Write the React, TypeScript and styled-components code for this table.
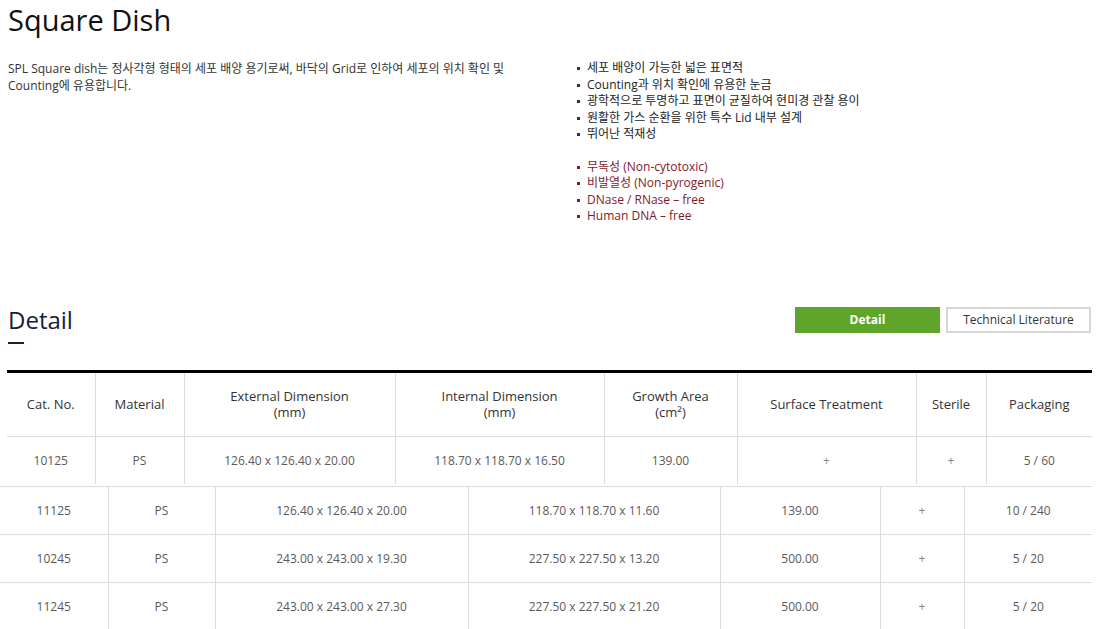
import React from 'react';
import styled, { createGlobalStyle } from 'styled-components';

type SpecRow = {
  cat: string;
  material: string;
  external: string;
  internal: string;
  area: string;
  surface?: string;
  sterile: string;
  packaging: string;
};

const GlobalStyle = createGlobalStyle`
  body {
    margin: 0;
    background: #fff;
    font-family: 'Open Sans', 'Noto Sans CJK KR', sans-serif;
    color: #333;
  }
`;

const Page = styled.div`
  width: 1097px;
  overflow: hidden;
`;

const Title = styled.h1`
  margin: 0;
  padding-left: 8px;
  font-size: 29px;
  font-weight: 400;
  line-height: 40px;
  color: #111;
`;

const Intro = styled.section`
  display: grid;
  grid-template-columns: 575px 1fr;
  margin-top: 20px;
`;

const Lead = styled.p`
  margin: 0;
  padding-left: 8px;
  max-width: 500px;
  font-size: 12px;
  line-height: 17px;
  color: #333;
`;

const Features = styled.ul`
  margin: 0;
  padding: 0;
  list-style: none;
`;

const Feature = styled.li<{ accent?: boolean; spaced?: boolean }>`
  position: relative;
  padding-left: 12px;
  margin-top: ${(p) => (p.spaced ? '16px' : '0')};
  font-size: 12px;
  line-height: 16.5px;
  color: ${(p) => (p.accent ? '#7e1a2a' : '#222')};
  &::before {
    content: '';
    position: absolute;
    left: 2px;
    top: 7px;
    width: 3px;
    height: 3px;
    background: ${(p) => (p.accent ? '#7e1a2a' : '#333')};
  }
`;

const DetailBar = styled.div`
  display: flex;
  justify-content: space-between;
  align-items: flex-start;
  margin-top: 80px;
  padding: 0 6px 0 8px;
  margin-bottom: 26px;
`;

const Heading = styled.h2`
  margin: 0;
  font-size: 24px;
  font-weight: 400;
  line-height: 30px;
  color: #15203a;
  &::after {
    content: '';
    display: block;
    width: 16px;
    height: 2px;
    margin-top: 7px;
    background: #15203a;
  }
`;

const Tabs = styled.div`
  display: flex;
  gap: 6px;
  margin-top: 2px;
`;

const Tab = styled.button<{ active?: boolean }>`
  width: 145px;
  height: 26px;
  padding: 0;
  font-family: inherit;
  font-size: 12px;
  font-weight: ${(p) => (p.active ? 700 : 400)};
  color: ${(p) => (p.active ? '#fff' : '#333')};
  background: ${(p) => (p.active ? '#5fa52a' : '#fff')};
  border: 2px solid ${(p) => (p.active ? '#5fa52a' : '#d6d6d6')};
  cursor: pointer;
`;

const SpecTable = styled.table<{ offset: number; width: number; ruled?: boolean; gap?: number }>`
  margin-left: ${(p) => p.offset}px;
  margin-top: ${(p) => p.gap ?? 0}px;
  width: ${(p) => p.width}px;
  table-layout: fixed;
  border-collapse: collapse;
  border-top: ${(p) => (p.ruled ? '3px solid #000' : '1px solid #dcdcdc')};
`;

const HeadCell = styled.th`
  height: 63px;
  padding: 0 4px;
  font-size: 13px;
  font-weight: 400;
  line-height: 16px;
  color: #333;
  text-align: center;
  border-bottom: 1px solid #dcdcdc;
  & + & {
    border-left: 1px solid #dcdcdc;
  }
`;

const HeadLine = styled.span`
  display: block;
`;

const Cell = styled.td`
  height: 47px;
  padding: 0 4px;
  font-size: 12px;
  color: #5a5a5a;
  text-align: center;
  & + & {
    border-left: 1px solid #dcdcdc;
  }
`;

const Row = styled.tr<{ ruled?: boolean }>`
  border-bottom: ${(p) => (p.ruled ? '1px solid #dcdcdc' : 'none')};
`;

const Plus = styled.span`
  color: #888;
`;

const headCols = [88, 89, 211, 209, 133, 179, 70, 106];
const bodyCols = [108, 107, 253, 252, 160, 84, 128];

const headers: string[][] = [
  ['Cat. No.'],
  ['Material'],
  ['External Dimension', '(mm)'],
  ['Internal Dimension', '(mm)'],
  ['Growth Area', '(cm²)'],
  ['Surface Treatment'],
  ['Sterile'],
  ['Packaging'],
];

const firstRow: SpecRow = {
  cat: '10125',
  material: 'PS',
  external: '126.40 x 126.40 x 20.00',
  internal: '118.70 x 118.70 x 16.50',
  area: '139.00',
  surface: '+',
  sterile: '+',
  packaging: '5 / 60',
};

const moreRows: SpecRow[] = [
  { cat: '11125', material: 'PS', external: '126.40 x 126.40 x 20.00', internal: '118.70 x 118.70 x 11.60', area: '139.00', sterile: '+', packaging: '10 / 240' },
  { cat: '10245', material: 'PS', external: '243.00 x 243.00 x 19.30', internal: '227.50 x 227.50 x 13.20', area: '500.00', sterile: '+', packaging: '5 / 20' },
  { cat: '11245', material: 'PS', external: '243.00 x 243.00 x 27.30', internal: '227.50 x 227.50 x 21.20', area: '500.00', sterile: '+', packaging: '5 / 20' },
];

const features = [
  '세포 배양이 가능한 넓은 표면적',
  'Counting과 위치 확인에 유용한 눈금',
  '광학적으로 투명하고 표면이 균질하여 현미경 관찰 용이',
  '원활한 가스 순환을 위한 특수 Lid 내부 설계',
  '뛰어난 적재성',
];

const certs = ['무독성 (Non-cytotoxic)', '비발열성 (Non-pyrogenic)', 'DNase / RNase – free', 'Human DNA – free'];

const App = () => {
  return (
    <Page>
      <GlobalStyle />
      <Title>Square Dish</Title>
      <Intro>
        <Lead>
          SPL Square dish는 정사각형 형태의 세포 배양 용기로써, 바닥의 Grid로 인하여 세포의 위치 확인 및 Counting에 유용합니다.
        </Lead>
        <Features>
          {features.map((f) => (
            <Feature key={f}>{f}</Feature>
          ))}
          {certs.map((c, i) => (
            <Feature key={c} accent spaced={i === 0}>
              {c}
            </Feature>
          ))}
        </Features>
      </Intro>

      <DetailBar>
        <Heading>Detail</Heading>
        <Tabs>
          <Tab active>Detail</Tab>
          <Tab>Technical Literature</Tab>
        </Tabs>
      </DetailBar>

      <SpecTable offset={7} width={1085} ruled>
        <colgroup>
          {headCols.map((w, i) => (
            <col key={i} style={{ width: w }} />
          ))}
        </colgroup>
        <thead>
          <tr>
            {headers.map((lines) => (
              <HeadCell key={lines[0]}>
                {lines.map((l) => (
                  <HeadLine key={l}>{l}</HeadLine>
                ))}
              </HeadCell>
            ))}
          </tr>
        </thead>
        <tbody>
          <Row>
            <Cell>{firstRow.cat}</Cell>
            <Cell>{firstRow.material}</Cell>
            <Cell>{firstRow.external}</Cell>
            <Cell>{firstRow.internal}</Cell>
            <Cell>{firstRow.area}</Cell>
            <Cell>
              <Plus>{firstRow.surface}</Plus>
            </Cell>
            <Cell>
              <Plus>{firstRow.sterile}</Plus>
            </Cell>
            <Cell>{firstRow.packaging}</Cell>
          </Row>
        </tbody>
      </SpecTable>

      <SpecTable offset={0} width={1092} gap={2}>
        <colgroup>
          {bodyCols.map((w, i) => (
            <col key={i} style={{ width: w }} />
          ))}
        </colgroup>
        <tbody>
          {moreRows.map((r) => (
            <Row key={r.cat} ruled>
              <Cell>{r.cat}</Cell>
              <Cell>{r.material}</Cell>
              <Cell>{r.external}</Cell>
              <Cell>{r.internal}</Cell>
              <Cell>{r.area}</Cell>
              <Cell>
                <Plus>{r.sterile}</Plus>
              </Cell>
              <Cell>{r.packaging}</Cell>
            </Row>
          ))}
        </tbody>
      </SpecTable>
    </Page>
  );
};

export default App;
